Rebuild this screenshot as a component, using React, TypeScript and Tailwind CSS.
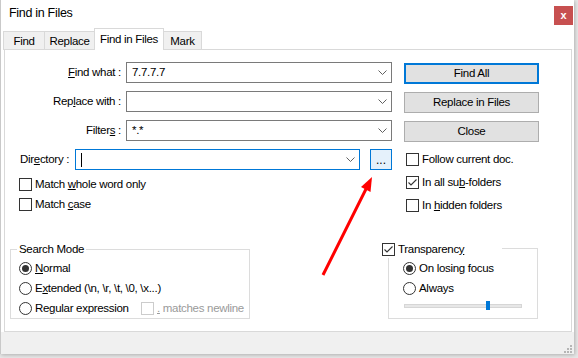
import React from 'react';

// small win32-ish controls for the Notepad++ "Find in Files" dialog

function Chevron() {
  return (
    <svg width="9" height="5" viewBox="0 0 9 5" className="shrink-0">
      <path d="M0.5 0.5 L4.5 4.5 L8.5 0.5" fill="none" stroke="#606060" strokeWidth="1" />
    </svg>
  );
}

function Combo({ value, className, focused, caret }: { value?: string; className: string; focused?: boolean; caret?: boolean }) {
  return (
    <div
      className={`flex h-[21px] items-center justify-between border bg-white pl-[5px] pr-[4px] ${
        focused ? 'border-[#0078d7]' : 'border-[#7a7a7a]'
      } ${className}`}
    >
      <span className="flex items-center leading-[13px]">
        {caret && <span className="block h-[14px] w-px bg-black" />}
        {value}
      </span>
      <Chevron />
    </div>
  );
}

function Checkbox({ checked, disabled }: { checked?: boolean; disabled?: boolean }) {
  return (
    <span
      className={`flex h-[13px] w-[13px] shrink-0 items-center justify-center border bg-white ${
        disabled ? 'border-[#cccccc]' : 'border-[#333333]'
      }`}
    >
      {checked && (
        <svg width="11" height="11" viewBox="0 0 11 11">
          <path d="M1.5 5.5 L4 8 L9.5 2.5" fill="none" stroke="#333333" strokeWidth="1.1" />
        </svg>
      )}
    </span>
  );
}

function Radio({ checked }: { checked?: boolean }) {
  return (
    <svg width="13" height="13" viewBox="0 0 13 13" className="shrink-0">
      <circle cx="6.5" cy="6.5" r="6" fill="white" stroke="#333333" strokeWidth="1" />
      {checked && <circle cx="6.5" cy="6.5" r="3.5" fill="#333333" />}
    </svg>
  );
}

function Button({ children, isDefault }: { children: React.ReactNode; isDefault?: boolean }) {
  return (
    <div
      className={`flex h-[21px] w-[135px] items-center justify-center bg-[#e1e1e1] leading-[13px] ${
        isDefault ? 'border-2 border-[#0078d7]' : 'border border-[#adadad]'
      }`}
    >
      {children}
    </div>
  );
}

function ComboRow({ label, value }: { label: React.ReactNode; value?: string }) {
  return (
    <div className="flex items-center">
      <div className="w-[116px] text-right leading-[13px]">{label}</div>
      <Combo value={value} className="ml-[5px] w-[266px]" />
    </div>
  );
}

export default function App() {
  return (
    <div className="relative h-[358px] w-[578px] overflow-hidden bg-[#e8e8e8] font-['Liberation_Sans',Arial,sans-serif] text-[11.5px] tracking-[-0.3px] text-black">
      <div className="flex h-[354px] w-[574px] flex-col border-l border-[#c9c9c9] bg-white shadow-[1px_1px_4px_rgba(0,0,0,0.25)]">
        {/* Title bar */}
        <div className="flex h-[28px] shrink-0 items-start justify-between">
          <span className="ml-[8px] mt-[6px] text-[12.5px] leading-[15px]">Find in Files</span>
          <div className="mr-[1px] mt-[6px] flex h-[19px] w-[19px] items-center justify-center bg-[#c75050] text-[11px] font-bold leading-none tracking-normal text-white">
            x
          </div>
        </div>

        {/* Tabs */}
        <div className="relative z-10 -mb-px flex h-[22px] shrink-0 items-end pl-[2px]">
          <div className="h-[19px] w-[42px] border border-[#d9d9d9] bg-[#f0f0f0] pt-[3px] text-center leading-[13px]">Find</div>
          <div className="-ml-px h-[19px] w-[51px] border border-[#d9d9d9] bg-[#f0f0f0] pt-[3px] text-center leading-[13px]">Replace</div>
          <div className="-ml-px h-[22px] w-[70px] border-x border-t border-[#d9d9d9] bg-white pt-[4px] text-center leading-[13px]">Find in Files</div>
          <div className="-ml-px h-[19px] w-[39px] border border-[#d9d9d9] bg-[#f0f0f0] pt-[3px] text-center leading-[13px]">Mark</div>
        </div>

        {/* Tab panel */}
        <div className="ml-[3px] h-[283px] w-[568px] shrink-0 border border-[#d9d9d9] pt-[12px]">
          <div className="flex">
            {/* left column */}
            <div className="flex w-[387px] flex-col">
              <div className="flex flex-col gap-[8px]">
                <ComboRow label={<><u>F</u>ind what :</>} value="7.7.7.7" />
                <ComboRow label={<>Rep<u>l</u>ace with :</>} />
                <ComboRow label={<>Filter<u>s</u> :</>} value="*.*" />
                <div className="flex items-center">
                  <div className="w-[70px] pl-[15px] leading-[13px]">
                    Dir<u>e</u>ctory :
                  </div>
                  <Combo focused caret className="w-[285px]" />
                  <div className="ml-[10px] flex h-[21px] w-[22px] items-end justify-center border border-[#0078d7] bg-[#e5f1fb] pb-[4px] text-[12px] leading-[10px] tracking-normal">
                    ...
                  </div>
                </div>
              </div>
              <div className="mt-[8px] flex flex-col gap-[7px] pl-[14px]">
                <label className="flex items-center gap-[3px] leading-[13px]">
                  <Checkbox />
                  <span>Match <u>w</u>hole word only</span>
                </label>
                <label className="flex items-center gap-[3px] leading-[13px]">
                  <Checkbox />
                  <span>Match <u>c</u>ase</span>
                </label>
              </div>
            </div>

            {/* right column */}
            <div className="ml-[12px] mt-[1px] flex flex-col">
              <div className="flex flex-col gap-[8px]">
                <Button isDefault>Find All</Button>
                <Button>Replace in Files</Button>
                <Button>Close</Button>
              </div>
              <div className="ml-[2px] mt-[11px] flex flex-col gap-[10px]">
                <label className="flex items-center gap-[3px] leading-[13px]">
                  <Checkbox />
                  <span>Follow current doc.</span>
                </label>
                <label className="flex items-center gap-[3px] leading-[13px]">
                  <Checkbox checked />
                  <span>In all su<u>b</u>-folders</span>
                </label>
                <label className="flex items-center gap-[3px] leading-[13px]">
                  <Checkbox />
                  <span>In <u>h</u>idden folders</span>
                </label>
              </div>
            </div>
          </div>

          {/* group boxes */}
          <div className="mt-[36px] flex items-start pl-[5px]">
            <div className="relative mt-[1px] h-[70px] w-[240px] border border-[#dcdcdc] pl-[8px] pt-[12px]">
              <span className="absolute left-[6px] top-[-7px] bg-white px-[2px] leading-[13px]">Search Mode</span>
              <div className="flex flex-col gap-[7px]">
                <label className="flex items-center gap-[3px] leading-[13px]">
                  <Radio checked />
                  <span><u>N</u>ormal</span>
                </label>
                <label className="flex items-center gap-[3px] leading-[13px]">
                  <Radio />
                  <span>E<u>x</u>tended (\n, \r, \t, \0, \x...)</span>
                </label>
                <div className="flex items-center leading-[13px]">
                  <label className="flex w-[122px] items-center gap-[3px]">
                    <Radio />
                    <span>Re<u>g</u>ular expression</span>
                  </label>
                  <Checkbox disabled />
                  <span className="ml-[3px] text-[#9a9a9a]"><u>.</u> matches newline</span>
                </div>
              </div>
            </div>

            <div className="relative ml-[138px] h-[71px] w-[150px] border border-[#dcdcdc] pl-[14px] pt-[13px]">
              <label className="absolute left-[-7px] top-[-6px] flex h-[15px] w-[120px] items-start bg-white leading-[13px]">
                <Checkbox checked />
                <span className="ml-[3px]">Transparenc<u>y</u></span>
              </label>
              <div className="flex flex-col gap-[7px]">
                <label className="flex items-center gap-[3px] leading-[13px]">
                  <Radio checked />
                  <span>On losing focus</span>
                </label>
                <label className="flex items-center gap-[3px] leading-[13px]">
                  <Radio />
                  <span>Always</span>
                </label>
              </div>
              <div className="relative ml-[1px] mt-[9px] h-[4px] w-[118px] border border-[#d6d6d6] bg-[#e7e7e7]">
                <span className="absolute left-[81px] top-[-4px] h-[9px] w-[4px] bg-[#0078d7]" />
              </div>
            </div>
          </div>
        </div>

        {/* footer with size grip */}
        <div className="flex flex-1 items-end justify-end bg-[#f0f0f0] pb-[1px] pr-[2px]">
          <svg width="9" height="9" viewBox="0 0 9 9">
            <rect x="7" y="1" width="2" height="2" fill="#b5b5b5" />
            <rect x="4" y="4" width="2" height="2" fill="#b5b5b5" />
            <rect x="7" y="4" width="2" height="2" fill="#b5b5b5" />
            <rect x="1" y="7" width="2" height="2" fill="#b5b5b5" />
            <rect x="4" y="7" width="2" height="2" fill="#b5b5b5" />
            <rect x="7" y="7" width="2" height="2" fill="#b5b5b5" />
          </svg>
        </div>
      </div>

      {/* red annotation arrow pointing at the browse button */}
      <svg className="pointer-events-none absolute left-0 top-0" width="578" height="358" viewBox="0 0 578 358">
        <line x1="323" y1="275" x2="367" y2="187" stroke="#ff0000" strokeWidth="3" />
        <polygon points="372,177 370.5,192 361,187" fill="#ff0000" />
      </svg>
    </div>
  );
}
